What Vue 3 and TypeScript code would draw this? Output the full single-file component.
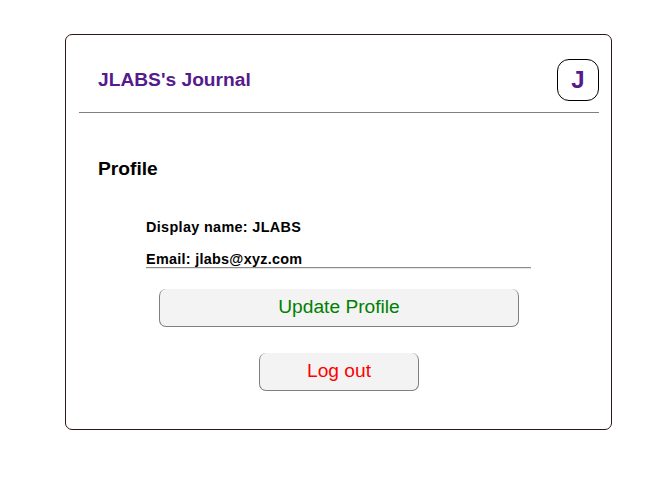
<script setup lang="ts">
const user: { name: string; email: string } = { name: 'JLABS', email: 'jlabs@xyz.com' }
</script>

<template>
  <main class="card">
    <header class="header">
      <a class="title">{{ user.name }}'s Journal</a>
      <a class="avatar">{{ user.name.charAt(0) }}</a>
    </header>
    <h2 class="heading">Profile</h2>
    <section class="details">
      <p class="name">Display name: {{ user.name }}</p>
      <p class="email">Email: {{ user.email }}</p>
    </section>
    <button class="btn update">Update Profile</button>
    <button class="btn logout">Log out</button>
  </main>
</template>

<style>
body {
  margin: 0;
  background: #fff;
}
</style>

<style scoped>
.card {
  box-sizing: border-box;
  width: 547px;
  height: 396px;
  margin: 34px 0 0 65px;
  padding: 0 12px 0 13px;
  border: 1px solid #2f1515;
  border-radius: 7px;
  display: flex;
  flex-direction: column;
  font-family: "Liberation Sans", Arial, sans-serif;
  color: #000;
}
.header {
  box-sizing: border-box;
  height: 78px;
  padding: 24px 0 0 19px;
  display: flex;
  justify-content: space-between;
  border-bottom: 1px solid #808080;
}
.title {
  font-size: 19.2px;
  line-height: 42px;
  font-weight: bold;
  color: #551a8b;
}
.avatar {
  box-sizing: border-box;
  width: 42px;
  height: 42px;
  border: 1px solid #000;
  border-radius: 12px;
  text-align: center;
  font-size: 24px;
  line-height: 40px;
  font-weight: bold;
  color: #551a8b;
}
.heading {
  margin: 45px 0 0 19px;
  font-size: 19.2px;
  line-height: 22px;
}
.details {
  box-sizing: border-box;
  width: 385px;
  height: 50px;
  margin: 39px 0 0 67px;
  border-bottom: 1px solid #e6e6e6;
  box-shadow: inset 0 -1px #8c8c8c;
  font-size: 14.4px;
  font-weight: bold;
}
.details p {
  margin: 0 0 16px;
  line-height: 16px;
}
.name {
  letter-spacing: 0.34px;
}
.email {
  letter-spacing: 0.28px;
}
.btn {
  box-sizing: border-box;
  height: 38px;
  padding: 1px 0 2px;
  border: 1px solid #808080;
  border-top: 0;
  border-radius: 7px;
  background: #f3f3f3;
  font-family: inherit;
  font-size: 19.2px;
}
.update {
  width: 360px;
  margin: 20px 0 0 80px;
  color: green;
}
.logout {
  width: 160px;
  margin: 26px 0 0 180px;
  color: red;
}
</style>
